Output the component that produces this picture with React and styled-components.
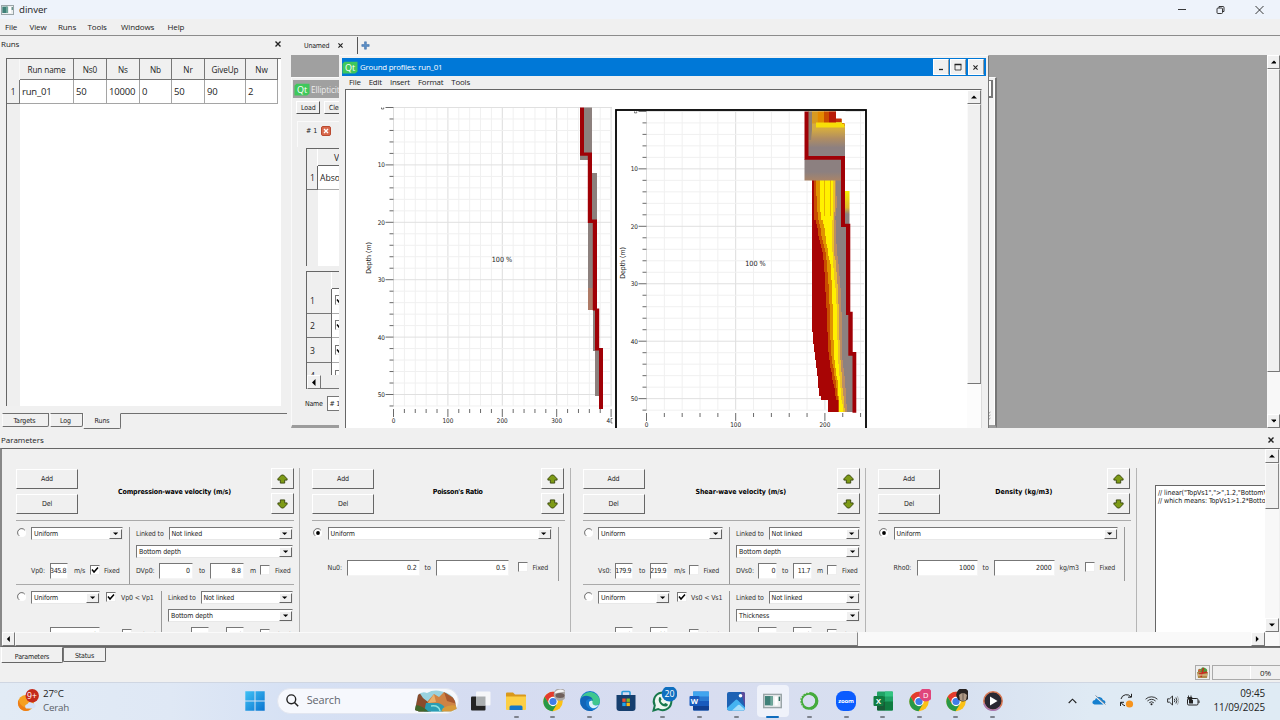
import React from "react";
import styled, { createGlobalStyle } from "styled-components";

const ui = '"Open Sans", "Noto Sans", sans-serif';
const tiny = '"DejaVu Sans Condensed", "DejaVu Sans", sans-serif';

const Global = createGlobalStyle`
  *, *::before, *::after { box-sizing: border-box; }
  body { margin: 0; background: #f0f0f0; overflow: hidden; }
  svg { display: block; flex: none; }
`;

const Screen = styled.div`
  width: 1280px; height: 720px; display: flex; flex-direction: column; overflow: hidden;
  background: #f0f0f0; color: #1c1c1c; font: 7.8px/1 ${ui}; white-space: nowrap;
`;

/* ---------- application chrome ---------- */
const TitleBar = styled.header`
  height: 19px; flex: none; display: flex; align-items: center; padding-left: 1px; background: #eef3fb;
`;
const AppTitle = styled.span`font-size: 9.7px; margin-left: 5px; flex: 1; letter-spacing: -0.05px;`;
const WindowControls = styled.div`display: flex; gap: 28px; padding: 0 15px 0 0;`;
const MenuBar = styled.nav`
  height: 17px; flex: none; display: flex; align-items: center; padding: 0 0 0 5px;
  border-bottom: 1px solid #8c8c8c; font-size: 8px; letter-spacing: -0.12px;
`;
const MenuItem = styled.span`width: ${p => p.$w}px;`;
const Main = styled.main`height: 393px; flex: none; display: flex;`;

/* ---------- docks ---------- */
const Dock = styled.section`width: 291px; flex: none; display: flex; flex-direction: column;`;
const DockTitle = styled.div`
  height: ${p => p.$h}px; flex: none; display: flex; align-items: center; justify-content: space-between;
  padding: ${p => p.$t || 0}px ${p => p.$r}px 1px 1px; font-size: 8px; letter-spacing: -0.05px;
`;
const TableFrame = styled.div`
  width: 275px; height: 348px; margin-left: 6px; flex: none; display: flex; flex-direction: column;
  border-left: 1px solid #666; border-top: 1px solid #666;
  background: linear-gradient(90deg, #efefef 13px, #fff 13px);
`;
const TableRow = styled.div`
  display: grid; grid-template-columns: 13px 54px 33px 33px 32px 33px 41px 32px; width: 271px;
  height: ${p => p.$h}px;
`;
const HeadCell = styled.div`
  display: flex; align-items: center; justify-content: center; background: #f0f0f0;
  border-right: 1px solid ${p => (p.$blank ? "#f8f8f8" : "#777")}; border-bottom: 1px solid ${p => (p.$blank ? "#f0f0f0" : "#777")};
  padding-top: 2px; color: #222; font-size: 8.2px; letter-spacing: -0.12px;
`;
const Cell = styled.div`
  display: flex; align-items: center; font-size: 9.5px; padding: 1px 0 0 2px; letter-spacing: -0.18px;
  background: #fff; border-right: 1px solid #a5a5a5; border-bottom: 1px solid #a5a5a5;
`;
const DockTabs = styled.div`display: flex; margin-top: 7px; width: 287px; font: 7px ${tiny}; letter-spacing: -0.1px;`;
const DockTab = styled.div`
  width: ${p => p.$w}px; height: ${p => (p.$on ? 16 : 14)}px; display: flex; align-items: center; justify-content: center;
  border: 1px solid #707070; border-left-color: #fafafa; border-top-color: ${p => (p.$on ? "transparent" : "#707070")};
  border-radius: 0 0 2px 0; margin-left: ${p => p.$ml || 0}px; padding: ${p => (p.$on ? "0" : "1px 2px 0 0")};
`;
const TabRest = styled.div`flex: 1; border-top: 1px solid #707070; height: 1px;`;

/* ---------- MDI workspace ---------- */
const Workspace = styled.section`flex: 1; display: flex; flex-direction: column; min-width: 0;`;
const WorkTabs = styled.div`height: 19px; flex: none; display: flex; align-items: center; font: 7px ${tiny};`;
const WorkTab = styled.div`
  width: 67px; height: 17px; display: flex; align-items: center; gap: 9px; padding-left: 13px;
  border-right: 1px solid #555; margin-right: 3px; letter-spacing: -0.2px;
`;
const DeskRow = styled.div`height: 374px; flex: none; display: flex; padding-bottom: 1px;`;
const Desk = styled.div`position: relative; width: 976px; height: 373px; background: #a0a0a0; overflow: hidden;`;
const ScrollColumn = styled.div`
  width: ${p => p.$w}px; display: flex; flex-direction: column; background: ${p => p.$bg || "#f8f8f8"}; flex: none;
`;
const ArrowButton = styled.div`
  width: ${p => p.$w}px; height: ${p => p.$h}px; flex: none; display: flex; align-items: center; justify-content: center;
  background: #f0f0f0; border: 1px solid #fff; border-right-color: #777; border-bottom-color: #777;
`;
const Thumb = styled.div`
  ${p => (p.$h ? `height: ${p.$h}px;` : "")} ${p => (p.$w ? `width: ${p.$w}px;` : "")}
  background: #f0f0f0; border: 1px solid #fafafa; border-right-color: #888; border-bottom-color: #777; flex: none;
`;
const Spacer = styled.div`flex: 1;`;

const BackWindow = styled.div`
  position: absolute; left: 0; top: 22px; width: 706px; height: 351px; background: #efefef;
  border: 1px solid #fafafa; border-right: 2px solid #777; border-bottom: 3px solid #9c9c9c;
  display: flex; justify-content: space-between; padding: 2px 0 0 2px;
`;
const BackBody = styled.div`width: 60px; display: flex; flex-direction: column; font: 7px ${tiny};`;
const BackTitle = styled.div`
  height: 18px; background: #a0a0a0; color: #ececec; display: flex; align-items: center; gap: 1px; padding-left: 1px;
  font: 8.2px ${ui}; letter-spacing: -0.1px; flex: none; margin-left: -1px;
`;
const BackToolbar = styled.div`display: flex; gap: 4px; padding: 3px 0 0 2px; letter-spacing: -0.15px;`;
const SmallButton = styled.div`
  width: 24px; height: 13px; display: flex; align-items: center; padding-left: 4px;
  border: 1px solid #fff; border-right-color: #555; border-bottom-color: #555;
`;
const BackTab = styled.div`
  height: 26px; margin: 7px 0 0 3px; padding-left: 8px; border: 1px solid #fafafa; border-bottom: 0; border-right: 0;
  display: flex; align-items: center; gap: 4px; flex: none; padding-bottom: 7px;
`;
const BackGrid = styled.div`
  height: ${p => p.$h}px; margin: ${p => p.$mt}px 0 0 12px; flex: none; overflow: hidden;
  border-left: 1px solid #666; border-top: 1px solid #666;
  background: linear-gradient(90deg, #efefef ${p => p.$head}px, #fff ${p => p.$head}px);
`;
const BackRow = styled.div`display: flex; height: ${p => p.$h}px; font: 8.6px ${ui}; overflow: hidden;`;
const RowHead = styled.div`
  width: ${p => p.$w}px; flex: none; display: flex; align-items: center; padding: 1px 0 0 3px; background: #efefef;
  border-right: 1px solid ${p => (p.$blank ? "#fff" : "#666")}; border-bottom: 1px solid ${p => (p.$blank ? "#efefef" : "#777")};
  ${p => p.$tall && "height: 25px;"}
`;
const RowCell = styled.div`
  flex: 1; display: flex; align-items: center; padding: 1px 0 0 ${p => p.$pl}px; border-bottom: 1px solid ${p => (p.$head ? "#666" : "#aaa")};
  background: ${p => (p.$head ? "#efefef" : "#fff")}; overflow: hidden; ${p => p.$tall && "height: 25px;"}
`;
const BackScroll = styled.div`display: flex; height: 14px; background: #efefef; border-bottom: 1px solid #777;`;
const NameLine = styled.div`display: flex; align-items: center; gap: 4px; margin: 7px 0 0 11px; height: 15px; letter-spacing: -0.25px;`;
const NameField = styled.div`width: 20px; height: 15px; background: #fff; border: 1px solid #777; padding: 3px 0 0 2px;`;
const BackEdge = styled.div`
  width: 7px; display: flex; flex-direction: column; background: #f4f4f4; border-right: 1px solid #fff;
`;
const BackEdgeButton = styled.div`
  width: 5px; height: 18px; background: #fff; border: 1px solid #777; border-width: 1px 2px 2px 0;
`;

const FrontWindow = styled.div`
  position: absolute; left: 48px; top: 0; width: 650px; height: 380px; background: #f0f0f0; border-right: 1px solid #777;
  border-top: 1px solid #fafafa; display: flex; flex-direction: column; padding: 2px 2px 0 3px;
`;
const FrontTitle = styled.div`
  height: 18px; flex: none; background: #0078d7; color: #fff; display: flex; align-items: center; padding: 0 1px 0 0;
  font-size: 7.9px; letter-spacing: -0.22px;
`;
const FrontCaption = styled.span`flex: 1; margin-left: 2px; padding-top: 1px;`;
const TitleButton = styled.div`
  width: 16px; height: 16px; margin-right: 1.4px; background: #f0f0f0; border: 1px solid #fff; border-right-color: #999;
  display: flex; align-items: center; justify-content: center;
`;
const FrontMenu = styled.div`
  height: 13px; flex: none; display: flex; align-items: center; gap: 8px; padding-left: 7px; font-size: 7.9px; letter-spacing: -0.2px;
`;
const Client = styled.div`
  margin-left: 3px; width: 637px; height: 340px; flex: none; display: flex; background: #fff;
  border-left: 1px solid #666; border-top: 1px solid #666; border-right: 1px solid #ddd;
`;

/* ---------- parameters dock ---------- */
const Params = styled.section`height: 235px; flex: none; display: flex; flex-direction: column;`;
const ParamsFrame = styled.div`
  height: 199px; flex: none; display: flex; border-top: 1px solid #666; border-left: 2px solid #888;
  border-bottom: 1px solid #666;
`;
const ParamsMain = styled.div`width: 1263px; display: flex; flex-direction: column;`;
const Groups = styled.div`height: 184px; overflow: hidden; display: flex; align-items: flex-start; padding-left: 14px; font: 7px ${tiny}; letter-spacing: -0.13px;`;
const Group = styled.div`
  width: ${p => p.$w}px; height: 190px; margin: 19px 12px 0 0; padding-right: 5px; border-right: 1px solid #b5b5b5;
  display: flex; flex-direction: column; flex: none;
`;
const GroupHead = styled.div`
  height: 53px; padding-bottom: 6px; border-bottom: 1px solid #aaa; display: flex; justify-content: space-between; align-items: center; flex: none;
`;
const ButtonStack = styled.div`display: flex; flex-direction: column; gap: ${p => p.$gap}px;`;
const PushButton = styled.div`
  width: ${p => p.$w}px; height: ${p => p.$h}px; display: flex; align-items: center; justify-content: center;
  border: 1px solid #fff; border-right: 1px solid #666; border-bottom: 1px solid #666;
`;
const GroupTitle = styled.strong`font-size: 7px; letter-spacing: ${p => p.$ls}px; color: #000; padding-top: 2px;`;
const ParamRow = styled.div`
  display: flex; height: ${p => p.$h}px; padding-top: 6px; flex: none;
  border-bottom: ${p => (p.$line ? "1px solid #aaa" : "0")};
`;
const RadioSlot = styled.div`width: ${p => p.$w || 15.6}px; padding: 1px 0 0 1px; flex: none;`;
const Side = styled.div`
  width: ${p => p.$w}px; flex: none; display: flex; flex-direction: column;
  ${p => p.$sep && "border-right: 1px solid #999; margin-right: 6px; height: " + p.$sep + "px;"}
`;
const Line = styled.div`display: flex; align-items: center; height: ${p => p.$h}px; margin-top: ${p => p.$mt || 0}px; flex: none;`;
const Label = styled.span`width: ${p => p.$w}px; flex: none; color: #333;`;
const Combo = styled.div`
  width: ${p => p.$w}px; height: 13px; flex: none; display: flex; align-items: center; justify-content: space-between;
  background: #fff; border: 1px solid #777; border-right-color: #e8e8e8; border-bottom-color: #e8e8e8; padding-left: 2px; color: #222;
`;
const ComboArrow = styled.div`
  width: 13px; height: 10px; display: flex; align-items: center; justify-content: center; background: #f0f0f0;
  border: 1px solid #fff; border-right-color: #666; border-bottom-color: #666;
`;
const Field = styled.div`
  width: ${p => p.$w}px; height: 16px; flex: none; display: flex; align-items: center; justify-content: flex-end; overflow: hidden;
  background: #fff; border: 1px solid #777; border-right-color: #f4f4f4; border-bottom-color: #f4f4f4;
  padding-right: ${p => (p.$w < 20 ? 1 : 2)}px;
  letter-spacing: ${p => (p.$w < 20 ? -0.42 : -0.13)}px; margin-right: ${p => p.$mr}px;
`;
const CheckBox = styled.div`
  width: 10px; height: 10px; flex: none; background: #fff; border: 1px solid #777; border-right-color: #eee; border-bottom-color: #eee;
  margin: -2px ${p => p.$mr}px 0 0; display: flex; align-items: center; justify-content: center;
`;
const Script = styled.div`
  width: 112px; height: 160px; margin: 36px 0 0 6.500px; background: #fff; border: 1px solid #666; border-right: 0; flex: none;
  padding: 3px 0 0 2px; line-height: 8.3px; color: #111; overflow: hidden; letter-spacing: -0.06px;
`;
const HScroll = styled.div`height: 14px; display: flex; background: #f9f9f9; flex: none;`;
const BottomTabs = styled.div`display: flex; height: 17px; font: 7px ${tiny}; letter-spacing: -0.17px; padding-left: 1px;`;
const BottomTab = styled.div`
  width: ${p => p.$w}px; height: ${p => (p.$on ? 16 : 15)}px; display: flex; align-items: center; justify-content: center;
  border: 1px solid #666; border-top-color: ${p => (p.$on ? "#f0f0f0" : "#777")}; border-left-color: ${p => (p.$on ? "#fff" : "#777")};
  border-radius: 0 0 2px 0; padding-top: ${p => (p.$on ? 3 : 2)}px;
`;
const StatusBar = styled.footer`height: 18px; flex: none; display: flex; justify-content: flex-end; align-items: flex-start; gap: 2px; padding-top: 1px;`;
const Progress = styled.div`
  width: 68px; height: 15px; border: 1px solid #aaa; border-width: 1px 0 1px 1px; display: flex; font-size: 8px; align-items: center;
`;
const ProgressBar = styled.div`width: 38px; height: 13px; border-right: 1px solid #fff; margin-right: 9px;`;

/* ---------- taskbar ---------- */
const Taskbar = styled.footer`
  height: 38px; flex: none; display: flex; align-items: center; border-top: 1px solid #cfd6e2; padding-bottom: 2px;
  background: linear-gradient(90deg, #e2ebf5 0, #dfe8f5 170px, #d6e1f4 290px, #d5dcf1 480px, #d8ddf0 700px, #d7e0f0 950px, #dfeaf4 1090px, #dfebf4 1280px);
`;
const Weather = styled.div`width: 237px; display: flex; align-items: center; gap: 4px; padding-left: 17px;`;
const WeatherText = styled.div`font-size: 9.8px; line-height: 13.5px; letter-spacing: -0.2px; color: #222; & > span { color: #5b6068; display: block; }`;
const Slot = styled.div`
  width: 36.65px; height: 37px; flex: none; display: flex; flex-direction: column; align-items: center; justify-content: center;
`;
const ActivePad = styled.div`
  width: 32px; height: 32px; border-radius: 4px; background: #eff2fa; display: flex; align-items: center; justify-content: center;
  margin: 0 -4px;
`;
const SlotBody = styled.div`height: 32px; display: flex; align-items: center; margin-top: 1px;`;
const Indicator = styled.i`
  width: ${p => (p.$on ? 13 : 5)}px; height: 2px; margin: -1px 0 -1px; border-radius: 2px;
  background: ${p => (p.$on ? "#0f6cbd" : p.$off ? "transparent" : "#7d828d")};
`;
const SearchBox = styled.div`
  width: 182px; height: 26px; margin: 0 2.7px 0 3px; flex: none; border-radius: 13px; background: #f6f8fd; border: 1px solid #e2e6f0;
  display: flex; align-items: center; padding: 0 1px 0 8px; font-size: 10.9px; letter-spacing: -0.1px; color: #60646c;
`;
const SearchText = styled.span`margin-left: 8px; flex: 1;`;
const Tray = styled.div`flex: 1; display: flex; align-items: center; padding-left: 57px;`;
const TrayItem = styled.div`width: ${p => p.$w}px; display: flex; justify-content: center; flex: none;`;
const Clock = styled.div`flex: 1; text-align: right; padding-right: 15px; font-size: 9.9px; line-height: 13.5px; letter-spacing: -0.1px; color: #222;`;

/* ---------- small drawings ---------- */
const dirs = { up: "M0 4h7L3.5 0.5z", down: "M0 0.5h7L3.5 4z", left: "M4.5 0v7L1 3.5z", right: "M1 0v7L4.5 3.5z" };
const Arrow = ({ d, s = 1 }) => (
  <svg width={7 * s} height={(d === "left" || d === "right" ? 7 : 4.5) * s} viewBox={d === "left" || d === "right" ? "0 0 7 7" : "0 0 7 4.5"}>
    <path d={dirs[d]} fill="#000" />
  </svg>
);
const Cross = ({ s = 6, w = 1.4, c = "#222" }) => (
  <svg width={s} height={s} viewBox="0 0 6 6"><path d="M.5.5l5 5M5.5.5l-5 5" stroke={c} strokeWidth={w} fill="none" /></svg>
);
const AppIcon = ({ w = 13, h = 10 }) => (
  <svg width={w} height={h} viewBox="0 0 13 10">
    <rect x=".5" y=".5" width="12" height="9" fill="#eceff0" stroke="#9aa5a8" />
    <rect x="1.3" y="1.6" width="5.4" height="6.4" fill="#3f8078" />
    <rect x="5" y="1.6" width="1.7" height="6.4" fill="#6fa79b" />
    <rect x="8" y="2" width="2" height="6" fill="#fff" /><path d="M11.2 2v3" stroke="#2f6b60" />
  </svg>
);
const QtIcon = () => (
  <svg width="16" height="13" viewBox="0 0 16 13">
    <path d="M2.5.8H15.5v9.6L13.2 12.5H.5V2.8z" fill="#3fc85b" />
    <text x="8" y="9.8" textAnchor="middle" fontFamily="Open Sans, sans-serif" fontSize="9" fill="#fff">Qt</text>
  </svg>
);
const Radio = ({ on }) => (
  <svg width="10" height="10" viewBox="0 0 10 10">
    <circle cx="5" cy="5" r="4" fill="#fff" />
    <path d="M7.8 2.2A4 4 0 1 0 2.2 7.8" fill="none" stroke="#666" strokeWidth="1" />
    {on && <circle cx="5" cy="5" r="1.9" fill="#000" />}
  </svg>
);
const Check = () => (
  <svg width="8" height="8" viewBox="0 0 8 8"><path d="M1 3.6l2 2.4L7 1.4" fill="none" stroke="#000" strokeWidth="1.5" /></svg>
);
const GreenArrow = ({ down }) => (
  <svg width="11" height="10" viewBox="0 0 11 10">
    <path d={down ? "M3.300.9h4.400v3h2.400v1.300L6.500 9H4.500L.9 5.200V3.900h2.400z" : "M3.300 9.100h4.400v-3h2.400V4.800L6.500 1H4.500L.9 4.800v1.300h2.400z"} fill="#7d9a16" stroke="#35430a" strokeWidth=".9" strokeLinejoin="round" />
  </svg>
);

const Box = ({ on, mr }) => <CheckBox $mr={mr}>{on && <Check />}</CheckBox>;
const Select = ({ w, children }) => <Combo $w={w}>{children}<ComboArrow><Arrow d="down" s={0.75} /></ComboArrow></Combo>;

/* ---------- charts ---------- */
const Axes = ({ x0, dx, xMax, y0, dy, right, bottom, labelY, depthX, pctX, pctY, yl }) => {
  const ys = Array.from({ length: 27 }, (_, i) => i * 2);
  const xs = Array.from({ length: xMax / 20 + 1 }, (_, i) => i * 20);
  return (
    <g fontFamily="DejaVu Sans Condensed, DejaVu Sans, sans-serif" fontSize="6.4" fill="#222">
      {xs.map(v => <path key={"g" + v} d={`M${x0 + v * dx} ${y0}V${bottom - 3}`} stroke={v % 100 ? "#f0f0f0" : "#dcdcdc"} />)}
      {ys.map(v => <path key={"h" + v} d={`M${x0} ${y0 + v * dy}H${right}`} stroke={v % 10 ? "#f0f0f0" : "#e0e0e0"} />)}
      {ys.map(v => <path key={"t" + v} d={`M${x0 - (v % 10 ? 4 : 8)} ${y0 + v * dy}H${x0}`} stroke="#444" strokeWidth=".8" />)}
      {xs.map(v => <path key={"u" + v} d={`M${x0 + v * dx} ${bottom}v${v % 100 ? 4 : 8}`} stroke="#444" strokeWidth=".8" />)}
      {ys.filter(v => v % 10 === 0 && v).map(v => <text key={"l" + v} x={x0 - 8.5} y={y0 + v * dy + 2.4} textAnchor="end">{v}</text>)}
      <path d={`M${x0 - 12} ${y0}v1.500h2.200v-1.500`} fill="none" stroke="#444" strokeWidth=".7" />
      {xs.filter(v => v % 100 === 0 && v < 400).map(v => <text key={"m" + v} x={x0 + v * dx} y={labelY} textAnchor="middle">{v}</text>)}
      <text transform={`translate(${depthX} ${yl}) rotate(-90)`} textAnchor="middle" fontSize="6.9">Depth (m)</text>
      <text x={pctX} y={pctY} textAnchor="middle" fontSize="7.2">100 %</text>
    </g>
  );
};

const ProfileVp = () => (
  <svg width="269" height="338" viewBox="346 90 269 338">
    <Axes x0={393.5} dx={0.544} xMax={400} y0={107.5} dy={5.74} right={612} bottom={409} labelY={423} depthX={371} yl={258} pctX={502} pctY={261.5} />
    <text x="606.500" y="423" fontFamily="DejaVu Sans Condensed, sans-serif" fontSize="6.4" fill="#222">4</text>
    <path d="M612.500 418.500h-1.500v4.500h1.500" fill="none" stroke="#444" strokeWidth=".7" />
    <g fill="#8c807d">
      <path d="M584 107.500h8V153h-8zM580 155h8v5h-8zM591.500 173h5.500v48h-5.500zM588 222h5v67h-5zM593 310h3v41h-3zM595 350h4.500v46H595z" />
    </g>
    <path d="M588 288h5v22h-5z" fill="#ae7a66" />
    <path d="M580 107.500h4v45h8v67h5v89h2.200v39.500h3.800v61h-4v-58.500h-4v-40h-2.200V223h-5v-67.200H580z" fill="#a00006" />
  </svg>
);

/* depth (px), then edges: left, red|dark orange, |orange, |yellow, |gold, |tan, |gray, right */
const bands = [
  [180, 812, 814, 816, 820, 833, 835, 836, 841],
  [205, 812, 814, 817, 820, 833, 835, 837, 841],
  [216, 812, 814, 818, 821, 833, 834, 835, 842],
  [222, 812, 817, 820, 824, 832, 834, 836, 846],
  [238, 812, 819, 822, 826, 832, 834, 836, 847],
  [250, 812, 823, 826, 828, 832.5, 834, 837, 847],
  [263, 812, 824, 827, 831, 833, 836, 838.5, 847],
  [290, 812, 825.5, 829, 832, 836, 838, 841, 847],
  [312, 812, 827, 830, 833, 837, 839, 841.5, 849],
  [330, 812.5, 827.5, 830, 833, 837, 839, 841.5, 850],
  [347, 814, 828, 831, 834, 838, 840, 842, 850],
  [352, 815, 829, 831, 834, 838, 840, 842, 853],
  [362, 816, 830, 832.5, 835, 838.5, 841, 843, 853],
  [380, 818, 833, 835.5, 837.5, 840, 842, 845, 853],
  [395, 819.5, 836, 837.5, 838.5, 841, 843.5, 846, 853],
  [400, 828, 838, 838.5, 839, 842, 844, 846, 853],
  [413, 828, 838, 838.5, 839.5, 844, 845.5, 848, 853],
];
const bandColors = ["#a80505", "#c84d00", "#e09300", "#fff000", "#ecc129", "#bd8d62", "#8c8180"];
const bandRects = [];
for (let y = 180; y < 412; y += 4) {
  const k = Math.max(1, bands.findIndex(b => b[0] > y));
  const a = bands[k - 1], b = bands[k], t = (y - a[0]) / (b[0] - a[0]);
  const e = a.slice(1).map((v, i) => Math.round(v + (b[i + 1] - v) * t));
  bandColors.forEach((c, i) => {
    if (e[i + 1] > e[i]) bandRects.push({ x: e[i], y, w: e[i + 1] - e[i], h: Math.min(4, 413 - y), c });
  });
}

const ProfileVs = () => (
  <svg width="252" height="338" viewBox="615 90 252 338">
    <defs>
      <linearGradient id="fade" x1="0" y1="0" x2="0" y2="1">
        <stop offset="0" stopColor="#d8ae3c" /><stop offset=".4" stopColor="#d3aa42" /><stop offset=".6" stopColor="#b08d62" /><stop offset=".8" stopColor="#8d8080" /><stop offset="1" stopColor="#8c8080" />
      </linearGradient>
      <linearGradient id="low" x1="0" y1="0" x2="0" y2="1">
        <stop offset="0" stopColor="#8c8080" /><stop offset=".6" stopColor="#8c8080" /><stop offset="1" stopColor="#a98468" />
      </linearGradient>
      <linearGradient id="side" x1="0" y1="0" x2="0" y2="1">
        <stop offset="0" stopColor="#f5ee00" /><stop offset=".5" stopColor="#dfb92c" /><stop offset=".7" stopColor="#8c8080" /><stop offset="1" stopColor="#8c8080" />
      </linearGradient>
    </defs>
    <rect x="616" y="110" width="250" height="330" fill="#fff" />
    <Axes x0={646.5} dx={0.892} xMax={240} y0={111.4} dy={5.745} right={864} bottom={413} labelY={427} depthX={624.5} yl={263} pctX={755.5} pctY={265.5} />
    <rect x="616" y="110" width="250" height="330" fill="none" stroke="#000" strokeWidth="1.8" />
    {bandRects.map((r, i) => <rect key={i} x={r.x} y={r.y} width={r.w} height={r.h} fill={r.c} shapeRendering="crispEdges" />)}
    <path d="M824 180h1v36h-1zM830 180h1v36h-1z" fill="#e6b400" />
    <rect x="808" y="111.5" width="37" height="45" fill="url(#fade)" />
    <path d="M808 111.500h4V130l-1 10h-3z" fill="#91806f" />
    <path d="M812 111.500h5.500v12H812z" fill="#d79a20" />
    <path d="M817.500 111.500h7v12h-7z" fill="#e38a00" />
    <path d="M824 111.500h5v12h-5z" fill="#cb4d00" />
    <path d="M829 111.500h7v12h-7z" fill="#b81b08" />
    <path d="M836 111h9.500v13H842v-5h-6z" fill="#fff" />
    <path d="M836 118.500h5.500v3.500h-5.500zM841.500 123h3v3h-3z" fill="#c03008" />
    <path d="M816 122.500h26v1h2.500v4H816z" fill="#f7de08" />
    <rect x="804.5" y="159" width="37" height="21.5" fill="url(#low)" />
    <rect x="845" y="191" width="4.500" height="33" fill="url(#side)" />
    <path d="M804.500 111.500h4v44.500h36.500v67.700h5.300v88h2.400V352h3.600v60.700h-3.800V355.700h-4.200V315h-2.300v-88H841v-67.300h-36.500z" fill="#a00006" />
  </svg>
);

/* ---------- parameter groups ---------- */
const GroupShell = ({ w, title, ls = -0.15, children }) => (
  <Group $w={w}>
    <GroupHead>
      <ButtonStack $gap={5}><PushButton $w={62} $h={20}>Add</PushButton><PushButton $w={62} $h={20}>Del</PushButton></ButtonStack>
      <GroupTitle $ls={ls}>{title}</GroupTitle>
      <ButtonStack $gap={4}><PushButton $w={23} $h={21}><GreenArrow /></PushButton><PushButton $w={23} $h={21}><GreenArrow down /></PushButton></ButtonStack>
    </GroupHead>
    {children}
  </Group>
);

const LinkSide = ({ first, second, wide, children }) => (
  <Side $w={wide}>
    <Line $h={13}><Label $w={32.5}>Linked to</Label><Select w={wide - 33}>{first}</Select></Line>
    <Line $h={13} $mt={5}><Select w={wide}>{second}</Select></Line>
    {children}
  </Side>
);

const VelocityP = () => (
  <GroupShell w={284} title="Compression-wave velocity (m/s)">
    <ParamRow $h={64} $line>
      <RadioSlot $w={15}><Radio /></RadioSlot>
      <Side $w={99} $sep={57}>
        <Line $h={13}><Select w={92}>Uniform</Select></Line>
        <Line $h={16} $mt={23}>
          <Label $w={19}>Vp0:</Label><Field $w={18} $mr={6}>345.8</Field><Label $w={16}>m/s</Label><Box on mr={4} /><Label $w={16}>Fixed</Label>
        </Line>
      </Side>
      <LinkSide first="Not linked" second="Bottom depth" wide={157}>
        <Line $h={16} $mt={5}>
          <Label $w={23}>DVp0:</Label><Field $w={34} $mr={6}>0</Field><Label $w={11}>to</Label><Field $w={34} $mr={6}>8.8</Field>
          <Label $w={10}>m</Label><Box mr={5} /><Label $w={16}>Fixed</Label>
        </Line>
      </LinkSide>
    </ParamRow>
    <ParamRow $h={70}>
      <RadioSlot $w={15}><Radio /></RadioSlot>
      <Side $w={131} $sep={64}>
        <Line $h={13}><Select w={69}>Uniform</Select><Label $w={6} /><Box on mr={5} /><Label $w={32}>Vp0 &lt; Vp1</Label></Line>
        <Line $h={16} $mt={23}>
          <Label $w={19}>Vp1:</Label><Field $w={50} $mr={6}>0</Field><Label $w={16}>m/s</Label><Box mr={8} /><Label $w={16}>Fixed</Label>
        </Line>
      </Side>
      <LinkSide first="Not linked" second="Bottom depth" wide={125}>
        <Line $h={16} $mt={5}>
          <Label $w={23}>DVp1:</Label><Field $w={18} $mr={6}>1</Field><Label $w={11}>to</Label><Field $w={18} $mr={6}>50</Field>
          <Label $w={10}>m</Label><Box mr={5} /><Label $w={16}>Fixed</Label>
        </Line>
      </LinkSide>
    </ParamRow>
  </GroupShell>
);

const VelocityS = () => (
  <GroupShell w={283.5} title="Shear-wave velocity (m/s)" ls={-0.07}>
    <ParamRow $h={64} $line>
      <RadioSlot><Radio /></RadioSlot>
      <Side $w={132} $sep={57}>
        <Line $h={13}><Select w={125}>Uniform</Select></Line>
        <Line $h={16} $mt={23}>
          <Label $w={17}>Vs0:</Label><Field $w={18} $mr={6}>179.9</Field><Label $w={11}>to</Label><Field $w={18} $mr={6}>219.9</Field>
          <Label $w={15}>m/s</Label><Box mr={4.5} /><Label $w={16}>Fixed</Label>
        </Line>
      </Side>
      <LinkSide first="Not linked" second="Bottom depth" wide={124}>
        <Line $h={16} $mt={5}>
          <Label $w={22}>DVs0:</Label><Field $w={19} $mr={5}>0</Field><Label $w={11}>to</Label><Field $w={19} $mr={5}>11.7</Field>
          <Label $w={10}>m</Label><Box mr={5} /><Label $w={16}>Fixed</Label>
        </Line>
      </LinkSide>
    </ParamRow>
    <ParamRow $h={70}>
      <RadioSlot><Radio /></RadioSlot>
      <Side $w={132} $sep={64}>
        <Line $h={13}><Select w={72}>Uniform</Select><Label $w={7} /><Box on mr={4} /><Label $w={32}>Vs0 &lt; Vs1</Label></Line>
        <Line $h={16} $mt={23}>
          <Label $w={17}>Vs1:</Label><Field $w={18} $mr={6}>150</Field><Label $w={11}>to</Label><Field $w={18} $mr={6}>500</Field>
          <Label $w={15}>m/s</Label><Box mr={4.5} /><Label $w={16}>Fixed</Label>
        </Line>
      </Side>
      <LinkSide first="Not linked" second="Thickness" wide={124}>
        <Line $h={16} $mt={5}>
          <Label $w={22}>DVs1:</Label><Field $w={19} $mr={5}>1</Field><Label $w={11}>to</Label><Field $w={19} $mr={5}>50</Field>
          <Label $w={10}>m</Label><Box mr={5} /><Label $w={16}>Fixed</Label>
        </Line>
      </LinkSide>
    </ParamRow>
  </GroupShell>
);

const SingleParam = ({ title, ls, name, nameW, from, to, fieldW, unit, unitW }) => (
  <GroupShell w={258.5} title={title} ls={ls}>
    <ParamRow $h={66}>
      <RadioSlot><Radio on /></RadioSlot>
      <Side $w={231} $sep={54}>
        <Line $h={13}><Select w={224}>Uniform</Select></Line>
        <Line $h={16} $mt={20}>
          <Label $w={nameW}>{name}</Label><Field $w={fieldW} $mr={5}>{from}</Field><Label $w={11}>to</Label>
          <Field $w={fieldW} $mr={unit ? 5 : 9}>{to}</Field>{unit && <Label $w={unitW}>{unit}</Label>}
          <Box mr={5} /><Label $w={16}>Fixed</Label>
        </Line>
      </Side>
    </ParamRow>
  </GroupShell>
);

/* ---------- taskbar icons ---------- */
const Ico = ({ children, vb = "0 0 24 24", s = 24 }) => <svg width={s} height={s} viewBox={vb}>{children}</svg>;
const Chrome = ({ badge }) => (
  <Ico>
    <circle cx="12" cy="12.500" r="9.700" fill="#fbc116" />
    <path d="M3.600 7.700A9.700 9.700 0 0 1 20.400 7.700H12L8 15z" fill="#e33b2e" />
    <path d="M3.600 7.700A9.700 9.700 0 0 0 11.500 22.200L16 15 12 17.100 8 15z" fill="#279847" />
    <circle cx="12" cy="12.500" r="4.700" fill="#fff" /><circle cx="12" cy="12.500" r="3.600" fill="#3f7de8" />
    {badge}
  </Ico>
);
const icons = [
  { off: true, el: <Ico><rect x="3" y="7.5" width="14.5" height="14" rx="1" fill="#232323" /><rect x="8" y="2.5" width="14.5" height="14" rx="1" fill="#f5f6f9" /><path d="M8 7.500h9.500v9H8z" fill="#aaaeb0" /></Ico> },
  { el: <Ico><path d="M2 4.500q0-1 1-1h6l2 2h10q1 0 1 1V10H2z" fill="#d9981c" /><path d="M2 7.500h20v12.500q0 1-1 1H3q-1 0-1-1z" fill="#fccf45" /><path d="M5.500 21v-3q0-1.500 1.500-1.500h10q1.500 0 1.500 1.500v3z" fill="#1577c9" /></Ico> },
  { el: <Chrome badge={<g><circle cx="19" cy="5.500" r="6.300" fill="#aaa6a4" /><path d="M13.500 4.500a6 5 0 0 1 10.500-2z" fill="#f3f3f3" /><ellipse cx="19" cy="6.500" rx="4.500" ry="2.500" fill="#6f605c" /></g>} /> },
  { el: <Ico><circle cx="12" cy="12" r="10" fill="#1479cf" /><path d="M2.500 10A10 10 0 0 1 22 12q0 4-4.500 4.500-4 0-3.500-2.500Q14 9 9 8.500 4.500 8.500 2.500 10z" fill="#3fc78f" /><path d="M2.500 10Q5 6 10 7q5 1 4.800 5Q12 7.500 8 12q-1 8 7.500 9.500Q6 24 2.500 15z" fill="#1165b8" /><path d="M11 13q1.500-2 3.500-1-.8 4 3 4.500 2.500 0 4-1Q18 20 14 19q-3.500-1.500-3-6z" fill="#d9f2fb" /></Ico> },
  { off: true, el: <Ico><path d="M8 6V3.500q0-1 1-1h6q1 0 1 1V6" fill="none" stroke="#2c9ddb" strokeWidth="1.6" /><path d="M2.500 6h19v13q0 3-3 3h-13q-3 0-3-3z" fill="#163f6e" /><path d="M8.300 9.500h3.400v3.400H8.300z" fill="#ef5030" /><path d="M12.500 9.500h3.400v3.400h-3.400z" fill="#84bc24" /><path d="M8.300 13.700h3.400v3.400H8.300z" fill="#21a5ec" /><path d="M12.500 13.700h3.400v3.400h-3.400z" fill="#fdb813" /></Ico> },
  { el: <Ico s={28} vb="-1 -2 28 28"><path d="M3.500 21.500l1.300-5A8.800 8.800 0 1 1 8.200 20z" fill="#eef7f1" stroke="#17784c" strokeWidth="2" /><path d="M9 8.500q1-1.200 1.800 0l.8 2-1 1.400q1.200 2.200 3.400 3.200l1.300-1.200 2.200 1q.9.800-.3 2-2 1.500-5.200-.5-4.300-3-3-7.900z" fill="#17784c" /><circle cx="19.500" cy="4.800" r="7.800" fill="#0f6fbf" /><text x="19.500" y="7.900" textAnchor="middle" fontFamily="Open Sans, sans-serif" fontSize="8.800" fill="#fff">20</text></Ico> },
  { el: <Ico><rect x="6" y="2.5" width="16" height="19" rx="1" fill="#2b7cd3" /><path d="M6 2.500h16v5H6z" fill="#41a5ee" /><path d="M6 12h16v5H6z" fill="#185abd" /><path d="M6 17h16v3.500q0 1-1 1H7q-1 0-1-1z" fill="#103f91" /><rect x="2.5" y="7" width="10" height="10" rx="1" fill="#185abd" /><text x="7.5" y="14.8" textAnchor="middle" fontFamily="Open Sans, sans-serif" fontWeight="700" fontSize="7.500" fill="#fff">W</text></Ico> },
  { el: <Ico><rect x="3" y="3" width="18" height="18.5" rx="2" fill="#1d62b4" /><path d="M17 3h2q2 0 2 2v13z" fill="#5c4b9a" /><path d="M3 19L11.500 11q1-.8 2 0L21 18.500v1q0 2-2 2H5q-2 0-2-2z" fill="#45b3f1" /><path d="M8 21.500l6-5.500q1-.6 1.800 0l5 4.500-1.800 1z" fill="#a5dffb" /><circle cx="16.5" cy="6.8" r="1.8" fill="#fff" /></Ico> },
  { on: true, el: <ActivePad><AppIcon w={19} h={16} /></ActivePad> },
  { el: <Ico><circle cx="12" cy="12" r="7.5" fill="none" stroke="#45ab3c" strokeWidth="2.6" /><path d="M12 3.500A8.500 8.500 0 0 0 5.500 17.500" fill="none" stroke="#d8e6df" strokeWidth="1.2" strokeDasharray="1.500 1.500" /><path d="M13 4.500A7.500 7.500 0 0 1 13.500 19.400" fill="none" stroke="#45ab3c" strokeWidth="3" /></Ico> },
  { el: <Ico><rect x="2" y="2" width="20" height="20" rx="7.5" fill="#0b5cff" /><text x="12" y="14" textAnchor="middle" fontFamily="Open Sans, sans-serif" fontWeight="700" fontSize="6" fill="#fff" letterSpacing="-.2">zoom</text></Ico> },
  { el: <Ico><rect x="6" y="2.5" width="16" height="19" rx="1" fill="#21a366" /><path d="M14 2.500h7q1 0 1 1v4h-8z" fill="#33c481" /><path d="M6 7.500h8v5H6z" fill="#107c41" /><path d="M6 12.500h8v9H7q-1 0-1-1z" fill="#185c37" /><path d="M14 12.500h8v8q0 1-1 1h-7z" fill="#107c41" /><rect x="2.5" y="7" width="10" height="10" rx="1" fill="#107c41" /><text x="7.5" y="14.7" textAnchor="middle" fontFamily="Open Sans, sans-serif" fontWeight="700" fontSize="7.500" fill="#fff">X</text></Ico> },
  { el: <Chrome badge={<g><circle cx="18.800" cy="5.800" r="6.800" fill="#e0457b" /><text x="18.800" y="8.600" textAnchor="middle" fontFamily="Open Sans, sans-serif" fontSize="7.500" fill="#fff">D</text></g>} /> },
  { el: <Chrome badge={<g><circle cx="18.800" cy="5.800" r="6.600" fill="#292321" /><path d="M15 6q4-4 8 0l-1 5.200q-3 1.200-6 0z" fill="#b09a86" /><path d="M19 4v7" stroke="#6b5b51" /></g>} /> },
  { el: <Ico><circle cx="12" cy="12" r="9.2" fill="#2a2832" stroke="#d97752" strokeWidth="1.5" /><path d="M3 14.500A9.300 9.300 0 0 0 19 18" fill="none" stroke="#a67bb6" strokeWidth="1.5" /><path d="M9 7.500l7.500 4.500L9 16.500z" fill="#fff" /></Ico> },
];

export default function App() {
  return (
    <Screen>
      <Global />
      <TitleBar>
        <AppIcon /><AppTitle>dinver</AppTitle>
        <WindowControls>
          <svg width="10" height="10" viewBox="0 0 10 10"><path d="M1 4.500h8" stroke="#222" strokeWidth=".9" /></svg>
          <svg width="11" height="10" viewBox="0 0 11 10"><rect x="2" y="3" width="5.5" height="5.5" rx="1" fill="none" stroke="#222" strokeWidth=".9" /><path d="M4 2.800V1.500h4q1 0 1 1v4H7.700" fill="none" stroke="#222" strokeWidth=".9" /></svg>
          <svg width="11" height="10" viewBox="0 0 11 10"><path d="M1.500 1l8 8M9.500 1l-8 8" stroke="#222" strokeWidth=".9" /></svg>
        </WindowControls>
      </TitleBar>
      <MenuBar>
        <MenuItem $w={24.5}>File</MenuItem><MenuItem $w={28.5}>View</MenuItem><MenuItem $w={29.5}>Runs</MenuItem>
        <MenuItem $w={33.5}>Tools</MenuItem><MenuItem $w={46.5}>Windows</MenuItem><MenuItem $w={30}>Help</MenuItem>
      </MenuBar>

      <Main>
        <Dock>
          <DockTitle $h={17} $r={10}><span>Runs</span><Cross /></DockTitle>
          <Spacer />
          <TableFrame>
            <TableRow $h={21}>
              <HeadCell $blank />
              {["Run name", "Ns0", "Ns", "Nb", "Nr", "GiveUp", "Nw"].map(h => <HeadCell key={h}>{h}</HeadCell>)}
            </TableRow>
            <TableRow $h={24}>
              <HeadCell>1</HeadCell>
              {["run_01", "50", "10000", "0", "50", "90", "2"].map((c, i) => <Cell key={i}>{c}</Cell>)}
            </TableRow>
          </TableFrame>
          <DockTabs>
            <DockTab $w={47} $ml={2}>Targets</DockTab><DockTab $w={33} $ml={1}>Log</DockTab><DockTab $w={38} $on>Runs</DockTab><TabRest />
          </DockTabs>
        </Dock>

        <Workspace>
          <WorkTabs>
            <WorkTab>Unamed<Cross s={5} /></WorkTab>
            <svg width="9" height="9" viewBox="0 0 9 9"><path d="M3.500.8h1.900v2.700h2.800v1.900H5.400v2.800H3.500V5.400H.8V3.500h2.700z" fill="#5b8fc6" stroke="#3868a4" strokeWidth=".5" /></svg>
          </WorkTabs>
          <DeskRow>
            <Desk>
              <BackWindow>
                <BackBody>
                  <BackTitle><QtIcon />Ellipticity</BackTitle>
                  <BackToolbar><SmallButton>Load</SmallButton><SmallButton>Clear</SmallButton></BackToolbar>
                  <BackTab># 1
                    <svg width="10" height="10" viewBox="0 0 10 10"><rect x=".5" y=".5" width="9" height="9" rx="1.5" fill="#d9694d" stroke="#b94a30" /><path d="M3 3l4 4M7 3L3 7" stroke="#fff" strokeWidth="1.4" /></svg>
                  </BackTab>
                  <BackGrid $h={118} $mt={1} $head={11}>
                    <BackRow $h={17}><RowHead $w={11} $blank /><RowCell $head $pl={16}>Value</RowCell></BackRow>
                    <BackRow $h={24}><RowHead $w={11}>1</RowHead><RowCell $pl={2}>Absolute</RowCell></BackRow>
                  </BackGrid>
                  <BackGrid $h={118} $mt={5} $head={25}>
                    <BackRow $h={17}><RowHead $w={25} $blank /><RowCell $head $pl={4} /></BackRow>
                    {[1, 2, 3].map(n => <BackRow key={n} $h={24.7}><RowHead $w={25}>{n}</RowHead><RowCell $pl={3}><Box on mr={0} /></RowCell></BackRow>)}
                    <BackRow $h={12}><RowHead $w={25} $tall>4</RowHead><RowCell $pl={3} $tall><Box mr={0} /></RowCell></BackRow>
                    <BackScroll><ArrowButton $w={14} $h={14}><Arrow d="left" /></ArrowButton></BackScroll>
                  </BackGrid>
                  <NameLine>Name<NameField># 1</NameField></NameLine>
                </BackBody>
                <BackEdge>
                  <BackEdgeButton /><Spacer />
                  <svg width="5" height="14" viewBox="0 0 5 14"><path d="M0 3l2.500-2M0 6l2.500-2M0 9l2.500-2" stroke="#888" strokeWidth=".8" /></svg>
                </BackEdge>
              </BackWindow>
              <FrontWindow>
                <FrontTitle>
                  <QtIcon /><FrontCaption>Ground profiles: run_01</FrontCaption>
                  <TitleButton><svg width="8" height="8" viewBox="0 0 8 8"><path d="M2 6.500h4" stroke="#222" strokeWidth="1.3" /></svg></TitleButton>
                  <TitleButton><svg width="8" height="8" viewBox="0 0 8 8"><path d="M1 1.500h6v5.500H1z" fill="none" stroke="#222" strokeWidth=".8" /><path d="M.6 1.500h6.800" stroke="#222" strokeWidth="1.5" /></svg></TitleButton>
                  <TitleButton><Cross s={5} w={1.3} /></TitleButton>
                </FrontTitle>
                <FrontMenu><span>File</span><span>Edit</span><span>Insert</span><span>Format</span><span>Tools</span></FrontMenu>
                <Client>
                  <ProfileVp /><ProfileVs /><Spacer />
                  <ScrollColumn $w={14} $bg="#fcfcfc"><ArrowButton $w={14} $h={14}><Arrow d="up" s={0.85} /></ArrowButton><Thumb $h={280} /></ScrollColumn>
                </Client>
              </FrontWindow>
            </Desk>
            <ScrollColumn $w={13}>
              <ArrowButton $w={13} $h={14}><Arrow d="up" s={0.85} /></ArrowButton>
              <Thumb $h={303} /><Spacer />
              <ArrowButton $w={13} $h={14}><Arrow d="down" s={0.85} /></ArrowButton>
            </ScrollColumn>
          </DeskRow>
        </Workspace>
      </Main>

      <Params>
        <DockTitle $h={19} $r={6} $t={3}><span>Parameters</span><Cross /></DockTitle>
        <ParamsFrame>
          <ParamsMain>
            <Groups>
              <VelocityP />
              <SingleParam title="Poisson's Ratio" ls={-0.27} name="Nu0:" nameW={19} from="0.2" to="0.5" fieldW={73} />
              <VelocityS />
              <SingleParam title="Density (kg/m3)" ls={0.02} name="Rho0:" nameW={23} from="1000" to="2000" fieldW={61} unit="kg/m3" unitW={25} />
              <Script>// linear("TopVs1","&gt;",1.2,"BottomVs0");<br />// which means: TopVs1&gt;1.2*BottomVs0</Script>
            </Groups>
            <HScroll>
              <ArrowButton $w={13} $h={14}><Arrow d="left" s={0.85} /></ArrowButton><Thumb $w={843} /><Spacer />
              <ArrowButton $w={14} $h={14}><Arrow d="right" s={0.85} /></ArrowButton>
            </HScroll>
          </ParamsMain>
          <ScrollColumn $w={14}>
            <ArrowButton $w={14} $h={14}><Arrow d="up" s={0.85} /></ArrowButton><Thumb $h={46} /><Spacer />
            <ArrowButton $w={14} $h={14}><Arrow d="down" s={0.85} /></ArrowButton>
            <HScroll />
          </ScrollColumn>
        </ParamsFrame>
        <BottomTabs><BottomTab $w={62} $on>Parameters</BottomTab><BottomTab $w={43}>Status</BottomTab><TabRest /></BottomTabs>
      </Params>
      <StatusBar>
        <svg width="15" height="15" viewBox="0 0 15 15"><rect x=".5" y=".5" width="14" height="14" fill="#eee" stroke="#aaa" /><path d="M2 7h11l-1 6H3z" fill="#b08a4a" /><path d="M3 7q0-4 3-3 1-3 4-1 3 1 2 4z" fill="#4f9a3c" /><path d="M8.500 3L6 12M4 9l8-2" stroke="#c92a20" strokeWidth="1.5" /><circle cx="4.5" cy="5.5" r="1.3" fill="#de5a3a" /><path d="M3 10h9" stroke="#e3cf9c" /></svg>
        <Progress><ProgressBar />0%</Progress>
      </StatusBar>

      <Taskbar>
        <Weather>
          <svg width="22" height="24" viewBox="0 0 22 24">
            <circle cx="9" cy="14" r="8" fill="#f6a021" /><path d="M9 22A8 8 0 0 1 1.500 11q2 8 12 9-2 2-4.500 2z" fill="#ee7d16" />
            <path d="M9 19.500q-2.500-3.500 1.500-4.500 1.500-3.500 5-1 3.500.5 3 3.500-1 2-3.500 2z" fill="#d4e2fa" />
            <circle cx="15.2" cy="6.8" r="6.7" fill="#c42b1c" /><text x="15" y="9.8" textAnchor="middle" fontFamily="Open Sans, sans-serif" fontSize="8.6" fill="#fff">9+</text>
          </svg>
          <WeatherText>27°C<span>Cerah</span></WeatherText>
        </Weather>
        <Slot>
          <Ico><defs><linearGradient id="win" x1="0" y1="0" x2="1" y2="1"><stop offset="0" stopColor="#3fc1f5" /><stop offset="1" stopColor="#0a74d0" /></linearGradient></defs><path d="M2.300 2.300h9.200v9.200H2.300zM12.500 2.300h9.200v9.200h-9.200zM2.300 12.500h9.200v9.200H2.300zM12.500 12.500h9.200v9.200h-9.200z" fill="url(#win)" /></Ico>
        </Slot>
        <SearchBox>
          <svg width="13" height="13" viewBox="0 0 13 13"><circle cx="5.3" cy="5.3" r="4.4" fill="none" stroke="#222" strokeWidth="1.4" /><path d="M8.500 8.500l3.700 3.700" stroke="#222" strokeWidth="1.5" /></svg>
          <SearchText>Search</SearchText>
          <svg width="43" height="22" viewBox="0 0 43 22">
            <defs><clipPath id="art"><path d="M1 20L4 5Q8 1 13 3 20-1 28 1.500 38 3 41 11L42.500 19 37 21.500H5z" /></clipPath></defs>
            <g clipPath="url(#art)">
              <rect width="43" height="22" fill="#9ad2df" /><path d="M0 22V3l5-1 4 6 5 4 3 10z" fill="#8a4b2c" />
              <path d="M13 12L20 4l5 3 5-5 6 4 7 9v4H25z" fill="#cf8344" /><path d="M20 4l2 8-8 1z" fill="#e9b06b" /><path d="M30 2l3 9 10 3v-4z" fill="#a9592f" />
              <path d="M12 13h12q10 3 5 9H10z" fill="#2a9db4" /><path d="M17 16q8-1 9 5" stroke="#8de0dc" fill="none" strokeWidth="1.5" />
              <path d="M0 15q8 0 15 7H0z" fill="#40672c" /><path d="M29 18q7-4 14-2v6H27z" fill="#d79a3a" />
            </g>
          </svg>
        </SearchBox>
        {icons.map((it, i) => <Slot key={i}><SlotBody>{it.el}</SlotBody><Indicator $on={it.on} $off={it.off} /></Slot>)}
        <Tray>
          <TrayItem $w={9}><svg width="9" height="6" viewBox="0 0 9 6"><path d="M.7 5l3.800-3.800L8.300 5" fill="none" stroke="#222" strokeWidth="1.1" /></svg></TrayItem>
          <TrayItem $w={45}><svg width="14" height="11" viewBox="0 0 14 11"><path d="M2.500 9.500Q0 9 .5 6.800 1 5 3 5 4 1.500 7.500 2q3 .4 3.500 3 2.500.2 2.500 2.300T11 9.500z" fill="#1680cf" /><path d="M3 1l10 9" stroke="#e6eef6" strokeWidth="1.6" /><path d="M3.500 .5l10 9" stroke="#65768a" strokeWidth=".8" /></svg></TrayItem>
          <TrayItem $w={9}><svg width="15" height="15" viewBox="0 0 15 15"><path d="M2 6a5.600 5.600 0 0 1 10-2M12.500.8V4.200H9M6 12.800A5.600 5.600 0 0 1 2 9M1.500 13V9.300H5" fill="none" stroke="#222" strokeWidth="1" /><circle cx="10.5" cy="11" r="3.6" fill="#f7941d" /></svg></TrayItem>
          <TrayItem $w={42}><svg width="13" height="11" viewBox="0 0 13 11"><path d="M.6 4.200a8.500 8.500 0 0 1 11.800 0M2.400 6a5.900 5.900 0 0 1 8.200 0M4.200 7.800a3.400 3.400 0 0 1 4.600 0" fill="none" stroke="#222" strokeWidth=".9" /><circle cx="6.5" cy="9.3" r="1" fill="#222" /></svg></TrayItem>
          <TrayItem $w={0}><svg width="12" height="11" viewBox="0 0 12 11"><path d="M.6 3.800h2L5.500 1v9L2.600 7.200h-2zM7.300 3.800q1.200 1.700 0 3.400M8.900 2.500q2.100 3 0 6" fill="none" stroke="#222" strokeWidth=".9" /><path d="M10.400 1.200q3 4.300 0 8.600" fill="none" stroke="#999" strokeWidth=".8" /></svg></TrayItem>
          <TrayItem $w={40}><svg width="14" height="12" viewBox="0 0 14 12"><rect x="1.5" y="3.5" width="10.5" height="6.5" rx="1.2" fill="none" stroke="#222" /><path d="M3 5h4v3.500H3zM12.500 5.500h1v2.500h-1z" fill="#222" /><path d="M2.500.5v2M5 .5v2M1.500 2.500h4.500v2L4 6z" stroke="#222" strokeWidth=".9" fill="#222" /></svg></TrayItem>
          <Clock>09:45<br />11/09/2025</Clock>
        </Tray>
      </Taskbar>
    </Screen>
  );
}
